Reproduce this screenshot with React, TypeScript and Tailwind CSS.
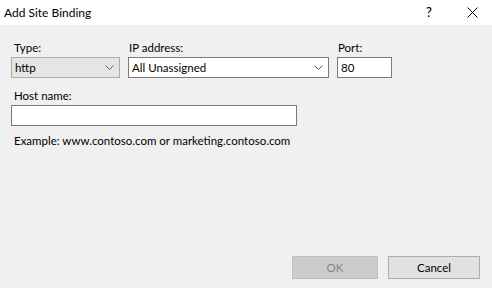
import React from 'react';

const font = { fontFamily: 'Lato, "Noto Sans", sans-serif' };

function Chevron() {
  return (
    <svg width="9" height="5" viewBox="0 0 9 5" className="shrink-0">
      <path d="M0.5 0.5 L4.5 4.5 L8.5 0.5" fill="none" stroke="#606060" strokeWidth="1" />
    </svg>
  );
}

export default function App() {
  return (
    <div className="w-[492px] h-[288px] bg-[#f0f0f0] flex flex-col text-[11.5px] text-black" style={font}>
      {/* Title bar */}
      <div className="h-[25px] bg-white flex items-center pl-[4px]">
        <span className="flex-1 text-[12px]">Add Site Binding</span>
        <span className="w-[46px] text-center text-[13px] font-medium">?</span>
        <span className="w-[40px] flex justify-center">
          <svg width="11" height="11" viewBox="0 0 11 11">
            <path d="M0.5 0.5 L10.5 10.5 M10.5 0.5 L0.5 10.5" stroke="#000" strokeWidth="1" />
          </svg>
        </span>
      </div>

      {/* Body */}
      <div className="flex-1 flex flex-col px-[11px] pt-[13px]">
        <div className="flex gap-[8px]">
          <div className="flex flex-col w-[109px]">
            <span className="pl-[3px] h-[19px] leading-[19px]">Type:</span>
            <div className="h-[21px] bg-[#e5e5e5] border border-[#acacac] flex items-center pl-[3px] pr-[5px]">
              <span className="flex-1">http</span>
              <Chevron />
            </div>
          </div>
          <div className="flex flex-col w-[201px]">
            <span className="pl-[1px] h-[19px] leading-[19px]">IP address:</span>
            <div className="h-[21px] bg-white border border-[#7a7a7a] flex items-center pl-[3px] pr-[5px]">
              <span className="flex-1">All Unassigned</span>
              <Chevron />
            </div>
          </div>
          <div className="flex flex-col w-[55px]">
            <span className="pl-[1px] h-[19px] leading-[19px]">Port:</span>
            <div className="h-[21px] bg-white border border-[#7a7a7a] flex items-center pl-[3px]">80</div>
          </div>
        </div>

        <span className="pl-[3px] mt-[8px] h-[19px] leading-[19px]">Host name:</span>
        <div className="h-[21px] w-[286px] bg-white border border-[#7a7a7a]" />
        <span className="pl-[3px] mt-[5px] h-[19px] leading-[19px]">Example: www.contoso.com or marketing.contoso.com</span>

        <div className="flex-1" />
        <div className="flex justify-end gap-[10px] pr-[1px] pb-[9px]">
          <div className="w-[86px] h-[23px] bg-[#cccccc] border border-[#bfbfbf] text-[#838383] flex items-center justify-center">OK</div>
          <div className="w-[92px] h-[23px] bg-[#e1e1e1] border border-[#adadad] flex items-center justify-center">Cancel</div>
        </div>
      </div>
    </div>
  );
}
